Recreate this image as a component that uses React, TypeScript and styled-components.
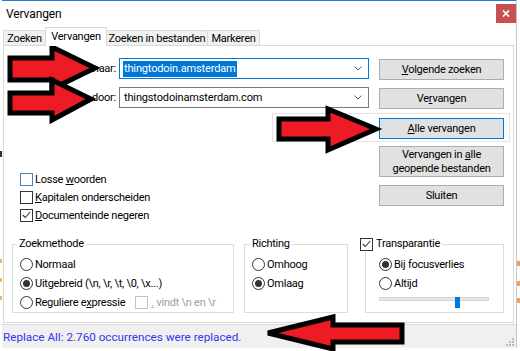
import React, { FC, ReactNode } from 'react';
import styled, { createGlobalStyle } from 'styled-components';

const GlobalStyle = createGlobalStyle`
  html, body {
    margin: 0;
    padding: 0;
    background: #ffffff;
  }
  body {
    font-family: Roboto, "Liberation Sans", Arial, sans-serif;
    font-size: 11px;
    color: #000000;
  }
  * {
    box-sizing: border-box;
  }
`;

const Screen = styled.div`
  position: relative;
  width: 520px;
  height: 351px;
  overflow: hidden;
  padding-left: 2px;
  background: #ffffff;
`;

// bits of the editor text peeking out behind the dialog
const Fragment = styled.span<{ $x: number; $y: number; $w: number; $h: number; $c: string }>`
  position: absolute;
  left: ${(p) => p.$x}px;
  top: ${(p) => p.$y}px;
  width: ${(p) => p.$w}px;
  height: ${(p) => p.$h}px;
  background: ${(p) => p.$c};
`;

const Dialog = styled.div`
  position: relative;
  display: flex;
  flex-direction: column;
  width: 514px;
  height: 348px;
  border-top: 1px solid #2b79d0;
  background: #ffffff;
  box-shadow: 1px 0 0 #c8c8c8;
`;

const TitleBar = styled.div`
  display: flex;
  align-items: center;
  height: 26px;
  padding-left: 4px;
  font-size: 12px;
  letter-spacing: -0.1px;
`;

const CloseButton = styled.div`
  display: flex;
  align-items: center;
  justify-content: center;
  align-self: flex-start;
  width: 20px;
  height: 19px;
  margin: 3px 0 0 auto;
  background: #c75050;
`;

const TabStrip = styled.div`
  position: relative;
  z-index: 1;
  display: flex;
  align-items: flex-start;
  height: 19px;
  margin-bottom: -1px;
  padding-left: 1px;
`;

const Tab = styled.div<{ $w: number; $active?: boolean }>`
  display: flex;
  align-items: center;
  justify-content: center;
  width: ${(p) => p.$w}px;
  height: ${(p) => (p.$active ? 19 : 15)}px;
  margin-top: ${(p) => (p.$active ? 0 : 3)}px;
  margin-left: -1px;
  border: 1px solid #d9d9d9;
  border-bottom: none;
  background: ${(p) => (p.$active ? '#ffffff' : '#f0f0f0')};
  padding-bottom: ${(p) => (p.$active ? 2 : 0)}px;
  letter-spacing: -0.25px;
  white-space: nowrap;

  &:first-child {
    margin-left: 0;
  }
`;

const Panel = styled.div`
  display: flex;
  flex-direction: column;
  height: 278px;
  margin: 0 2px 0 1px;
  padding-top: 12px;
  border: 1px solid #d9d9d9;
  letter-spacing: -0.25px;
`;

const TopSection = styled.div`
  display: flex;
  align-items: flex-start;
`;

const LeftColumn = styled.div`
  display: flex;
  flex-direction: column;
`;

const Fields = styled.div`
  display: flex;
  flex-direction: column;
  gap: 8px;
`;

const FieldRow = styled.div`
  display: grid;
  grid-template-columns: 112px 250px;
  column-gap: 3px;
  align-items: center;
`;

const FieldLabel = styled.span`
  text-align: right;
  white-space: nowrap;
`;

const ComboBox = styled.div<{ $focused?: boolean }>`
  display: flex;
  align-items: center;
  height: 21px;
  padding: 0 6px 0 3px;
  border: 1px solid ${(p) => (p.$focused ? '#0078d7' : '#7a7a7a')};
  background: #ffffff;
  font-size: 11px;
  letter-spacing: -0.15px;
`;

const ComboText = styled.span<{ $selected?: boolean }>`
  padding: 1px 1px;
  line-height: 14px;
  background: ${(p) => (p.$selected ? '#0078d7' : 'transparent')};
  color: ${(p) => (p.$selected ? '#ffffff' : '#000000')};
`;

const Chevron = styled.svg`
  margin-left: auto;
`;

const CheckList = styled.div`
  display: flex;
  flex-direction: column;
  margin: 62px 0 0 16px;
`;

const CheckRow = styled.div`
  display: flex;
  align-items: center;
  gap: 2px;
  height: 18px;
  white-space: nowrap;
`;

const Box = styled.span<{ $hover?: boolean; $disabled?: boolean }>`
  display: flex;
  align-items: center;
  justify-content: center;
  flex: none;
  width: 13px;
  height: 13px;
  border: 1px solid
    ${(p) => (p.$hover ? '#3e82c8' : p.$disabled ? '#c2c2c2' : '#333333')};
  background: #ffffff;
`;

const Circle = styled.span`
  display: flex;
  align-items: center;
  justify-content: center;
  flex: none;
  width: 13px;
  height: 13px;
  border: 1px solid #333333;
  border-radius: 50%;
  background: #ffffff;
`;

const Dot = styled.span`
  width: 7px;
  height: 7px;
  border-radius: 50%;
  background: #333333;
`;

const Key = styled.span`
  text-decoration: underline;
`;

const Muted = styled.span`
  color: #a0a0a0;
`;

const ButtonColumn = styled.div`
  display: flex;
  flex-direction: column;
  gap: 8px;
  width: 125px;
  margin: 1px 0 0 10px;
`;

const Button = styled.div<{ $tall?: boolean; $focused?: boolean }>`
  display: flex;
  align-items: center;
  justify-content: center;
  height: ${(p) => (p.$tall ? 31 : 21)}px;
  border: 1px solid ${(p) => (p.$focused ? '#0078d7' : '#adadad')};
  background: #e1e1e1;
  line-height: 14px;
  text-align: center;
  white-space: nowrap;
`;

const SelectionFrame = styled.div`
  margin: -4px -6px -4px -107px;
  padding: 4px 5px 2px 106px;
  border: 1px solid #e3e3e3;
`;

const GroupRow = styled.div`
  display: flex;
  align-items: flex-start;
  margin-top: 12px;
  padding-left: 8px;
`;

const Group = styled.fieldset<{ $w: number; $gap: number; $pad: number }>`
  width: ${(p) => p.$w}px;
  height: 77px;
  margin: 0 0 0 ${(p) => p.$gap}px;
  padding: 3px 4px 0 ${(p) => p.$pad}px;
  border: 1px solid #dcdcdc;
  min-width: 0;
`;

const Legend = styled.legend<{ $shift: number }>`
  display: flex;
  align-items: center;
  gap: 3px;
  height: 16px;
  margin-left: ${(p) => p.$shift}px;
  padding: 0 2px;
  line-height: 16px;
  white-space: nowrap;
`;

const RadioRow = styled.div`
  display: flex;
  align-items: center;
  gap: 2px;
  height: 19px;
  white-space: nowrap;
`;

const InlineCheck = styled.span`
  display: flex;
  align-items: center;
  gap: 3px;
  margin-left: 8px;
`;

const Slider = styled.div`
  position: relative;
  width: 110px;
  height: 12px;
`;

const Track = styled.div`
  height: 4px;
  margin-top: 4px;
  border: 1px solid #d6d6d6;
  background: #e7e7e7;
`;

const Thumb = styled.div`
  position: absolute;
  top: 0;
  width: 5px;
  height: 11px;
  background: #0078d7;
`;

const StatusBar = styled.div`
  position: relative;
  display: flex;
  align-items: center;
  height: 24px;
  margin-top: 1px;
  padding-left: 1px;
  border-top: 1px solid #dadada;
  background: #f0f0f0;
  font-size: 11.7px;
  color: #3535ee;
`;

const Grip = styled.svg`
  margin: auto 2px 2px auto;
`;

const Overlay = styled.svg`
  position: absolute;
  top: 0;
  left: 0;
  pointer-events: none;
`;

const CheckMark: FC = () => (
  <svg width="9" height="8" viewBox="0 0 9 8">
    <polyline points="0.8,4 3.3,6.5 8.2,1" fill="none" stroke="#333" strokeWidth="1.1" />
  </svg>
);

const Check: FC<{ checked?: boolean; hover?: boolean; disabled?: boolean }> = ({
  checked,
  hover,
  disabled,
}) => (
  <Box $hover={hover} $disabled={disabled}>
    {checked && <CheckMark />}
  </Box>
);

const Radio: FC<{ checked?: boolean; children: ReactNode }> = ({ checked, children }) => (
  <RadioRow>
    <Circle>{checked && <Dot />}</Circle>
    {children}
  </RadioRow>
);

const Combo: FC<{ value: string; focused?: boolean }> = ({ value, focused }) => (
  <ComboBox $focused={focused}>
    <ComboText $selected={focused}>{value}</ComboText>
    <Chevron width="8" height="5" viewBox="0 0 8 5">
      <polyline points="0.5,0.5 4,4 7.5,0.5" fill="none" stroke="#606060" strokeWidth="1" />
    </Chevron>
  </ComboBox>
);

const arrows = [
  '10,58 52,58 52,47 95,68 52,89 52,80 10,80',
  '10,93 52,93 52,80 91,99 52,120 52,113 10,113',
  '279,119 328,119 328,109 376,129 328,150 328,139 279,139',
  '402,325 333,325 333,317 268,333 333,349 333,342 402,342',
];

const App: FC = () => {
  const transparency = 0.72;

  return (
    <Screen>
      <GlobalStyle />
      <Fragment $x={0} $y={151} $w={3} $h={6} $c="#303030" />
      <Fragment $x={0} $y={259} $w={2} $h={4} $c="#f0b070" />
      <Fragment $x={0} $y={278} $w={2} $h={4} $c="#f0b070" />
      <Fragment $x={0} $y={296} $w={2} $h={4} $c="#f0b070" />
      <Fragment $x={517} $y={261} $w={3} $h={5} $c="#eea060" />
      <Fragment $x={517} $y={281} $w={3} $h={5} $c="#eea060" />
      <Fragment $x={517} $y={298} $w={3} $h={5} $c="#eea060" />

      <Dialog>
        <TitleBar>
          Vervangen
          <CloseButton>
            <svg width="8" height="7" viewBox="0 0 8 7">
              <path d="M1 0.5 L7 6.5 M7 0.5 L1 6.5" stroke="#ffffff" strokeWidth="1.7" />
            </svg>
          </CloseButton>
        </TitleBar>

        <TabStrip>
          <Tab $w={43}>Zoeken</Tab>
          <Tab $w={62} $active>
            Vervangen
          </Tab>
          <Tab $w={102}>Zoeken in bestanden</Tab>
          <Tab $w={53}>Markeren</Tab>
        </TabStrip>

        <Panel>
          <TopSection>
            <LeftColumn>
              <Fields>
                <FieldRow>
                  <FieldLabel>Zoeken naar:</FieldLabel>
                  <Combo value="thingtodoin.amsterdam" focused />
                </FieldRow>
                <FieldRow>
                  <FieldLabel>Vervangen door:</FieldLabel>
                  <Combo value="thingstodoinamsterdam.com" />
                </FieldRow>
              </Fields>

              <CheckList>
                <CheckRow>
                  <Check hover />
                  <span>
                    Losse <Key>w</Key>oorden
                  </span>
                </CheckRow>
                <CheckRow>
                  <Check />
                  <span>
                    <Key>K</Key>apitalen onderscheiden
                  </span>
                </CheckRow>
                <CheckRow>
                  <Check checked />
                  <span>
                    <Key>D</Key>ocumenteinde negeren
                  </span>
                </CheckRow>
              </CheckList>
            </LeftColumn>

            <ButtonColumn>
              <Button>
                <span>
                  <Key>V</Key>olgende zoeken
                </span>
              </Button>
              <Button>
                <span>
                  Ve<Key>r</Key>vangen
                </span>
              </Button>
              <SelectionFrame>
                <Button $focused>
                  <span>
                    <Key>A</Key>lle vervangen
                  </span>
                </Button>
              </SelectionFrame>
              <Button $tall>
                <span>
                  Vervangen in <Key>a</Key>lle
                  <br />
                  geopende bestanden
                </span>
              </Button>
              <Button>Sluiten</Button>
            </ButtonColumn>
          </TopSection>

          <GroupRow>
            <Group $w={222} $gap={0} $pad={7}>
              <Legend $shift={-3}>Zoekmethode</Legend>
              <Radio>Normaal</Radio>
              <Radio checked>{'Uitgebreid (\\n, \\r, \\t, \\0, \\x...)'}</Radio>
              <Radio>
                <span>
                  Reguliere e<Key>x</Key>pressie
                </span>
                <InlineCheck>
                  <Check disabled />
                  <Muted>
                    <Key>.</Key> {'vindt \\n en \\r'}
                  </Muted>
                </InlineCheck>
              </Radio>
            </Group>

            <Group $w={104} $gap={10} $pad={7}>
              <Legend $shift={-2}>Richting</Legend>
              <Radio>Omhoog</Radio>
              <Radio checked>Omlaag</Radio>
            </Group>

            <Group $w={139} $gap={17} $pad={13}>
              <Legend $shift={-21}>
                <Check checked />
                <span>Transparantie</span>
              </Legend>
              <Radio checked>Bij focusverlies</Radio>
              <Radio>Altijd</Radio>
              <Slider>
                <Track />
                <Thumb style={{ left: `${Math.round(transparency * 105)}px` }} />
              </Slider>
            </Group>
          </GroupRow>
        </Panel>

        <StatusBar>
          Replace All: 2.760 occurrences were replaced.
          <Grip width="10" height="10" viewBox="0 0 10 10">
            {[
              [8, 0],
              [8, 3],
              [5, 3],
              [8, 6],
              [5, 6],
              [2, 6],
            ].map(([x, y]) => (
              <rect key={`${x}-${y}`} x={x} y={y + 2} width="2" height="2" fill="#b8b8b8" />
            ))}
          </Grip>
        </StatusBar>
      </Dialog>

      <Overlay width="520" height="351" viewBox="0 0 520 351">
        {arrows.map((points) => (
          <polygon
            key={points}
            points={points}
            fill="#ed1c24"
            stroke="#000000"
            strokeWidth="5"
            strokeLinejoin="miter"
          />
        ))}
      </Overlay>
    </Screen>
  );
};

export default App;
